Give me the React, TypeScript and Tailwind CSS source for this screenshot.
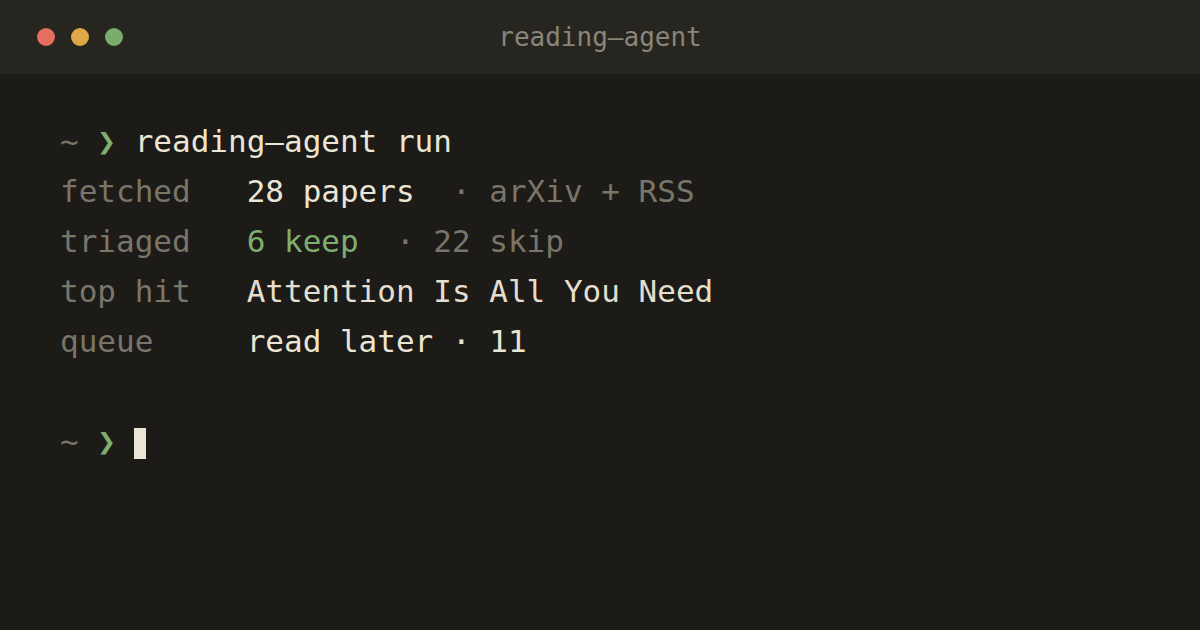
const rows = [
  { label: "fetched", parts: [{ t: "28 papers", c: "text-[#ebe5d5]" }, { t: "  · arXiv + RSS", c: "text-[#7a7569]" }] },
  { label: "triaged", parts: [{ t: "6 keep", c: "text-[#7fae6f]" }, { t: "  · 22 skip", c: "text-[#7a7569]" }] },
  { label: "top hit", parts: [{ t: "Attention Is All You Need", c: "text-[#e4dece]" }] },
  { label: "queue", parts: [{ t: "read later · 11", c: "text-[#ebe5d5]" }] },
]

function Prompt() {
  return (
    <>
      <span className="text-[#7a7569]">~ </span>
      <span className="text-[#7fae6f]">❯ </span>
    </>
  )
}

export default function App() {
  return (
    <div className="w-[1200px] h-[630px] bg-[#1c1b17] flex flex-col overflow-hidden">
      <div className="h-[74px] bg-[#272520] relative flex items-center justify-center shrink-0">
        <div className="absolute left-[37px] top-[28px] flex gap-[16px]">
          <span className="w-[18px] h-[18px] rounded-full bg-[#e46f5f]" />
          <span className="w-[18px] h-[18px] rounded-full bg-[#dfa745]" />
          <span className="w-[18px] h-[18px] rounded-full bg-[#7aac6e]" />
        </div>
        <span className="font-['DejaVu_Sans_Mono',monospace] text-[26px] text-[#8a8578]">reading–agent</span>
      </div>
      <div className="pl-[60px] pt-[42px] font-['DejaVu_Sans_Mono',monospace] text-[31px] leading-[50px] whitespace-pre">
        <div>
          <Prompt />
          <span className="text-[#ebe5d5]">reading–agent run</span>
        </div>
        {rows.map((row) => (
          <div key={row.label}>
            <span className="text-[#7a7569]">{row.label.padEnd(10, " ")}</span>
            {row.parts.map((p, i) => (
              <span key={i} className={p.c}>{p.t}</span>
            ))}
          </div>
        ))}
        <div>&nbsp;</div>
        <div className="flex items-center">
          <Prompt />
          <span className="w-[12px] h-[31px] bg-[#ebe5d5] ml-[-1px] mt-[4px]" />
        </div>
      </div>
    </div>
  )
}
